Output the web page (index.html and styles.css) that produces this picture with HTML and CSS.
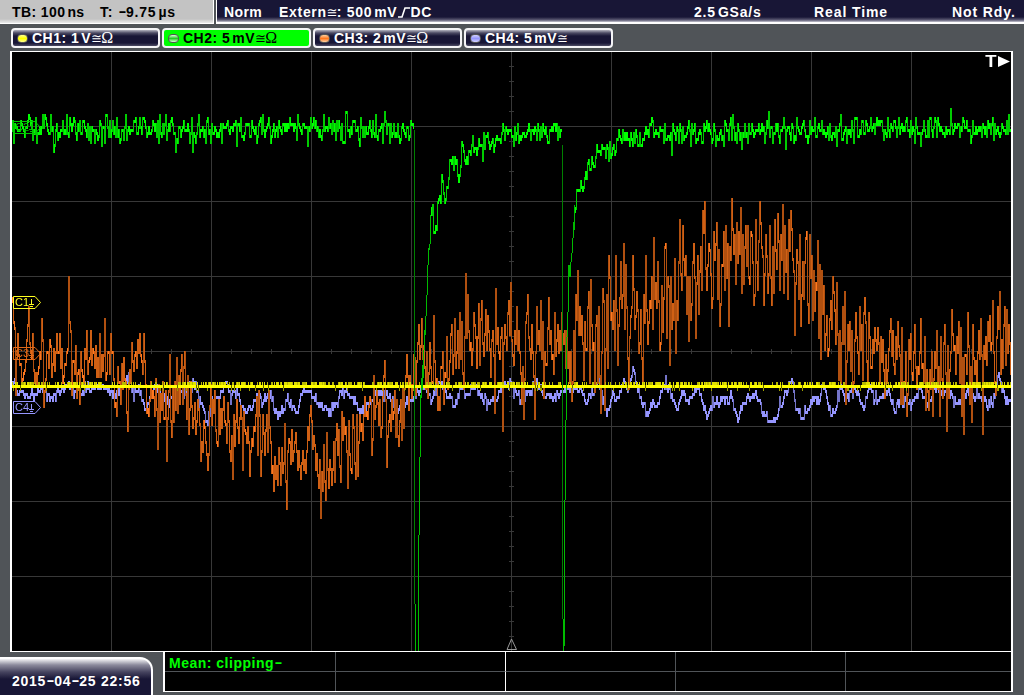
FILE: index.html
```html
<!DOCTYPE html>
<html lang="en">
<head>
    <meta charset="UTF-8">
    <meta name="viewport" content="width=device-width, initial-scale=1.0">
    <title>Oscilloscope</title>
    <link rel="stylesheet" href="styles.css">
</head>
<body>

    <div class="status-bar">
        <div class="timebase">
            <span class="tb">TB: 100<i></i>ns</span>
            <span class="offset">T: <b class="dash">-</b>9.75<i></i>µs</span>
        </div>
        <div class="trigger">
            <span class="mode">Norm</span>
            <span class="source">Extern<em>≅</em>: 500<i></i>mV<svg class="edge" width="13" height="11" viewBox="0 0 13 11"><path d="M1 10h4l3-9h5" fill="none" stroke="#fff" stroke-width="1.6"/></svg>DC</span>
            <span class="rate">2.5<i></i>GSa/s</span>
            <span class="sampling">Real Time</span>
            <span class="state">Not Rdy.</span>
        </div>
    </div>

    <div class="channels">
        <div class="channel ch1"><span class="led"></span><span class="ch-text">CH1: 1<i></i>V<em>≅</em><em class="ohm">Ω</em></span></div>
        <div class="channel ch2 active"><span class="led"></span><span class="ch-text">CH2: 5<i></i>mV<em>≅</em><em class="ohm">Ω</em></span></div>
        <div class="channel ch3"><span class="led"></span><span class="ch-text">CH3: 2<i></i>mV<em>≅</em><em class="ohm">Ω</em></span></div>
        <div class="channel ch4"><span class="led"></span><span class="ch-text">CH4: 5<i></i>mV<em>≅</em></span></div>
    </div>

    <div class="screen">
        <canvas id="plot" width="999" height="599"></canvas>
        <div class="tag tag1"><svg width="29" height="14"><path d="M.5 .5h21.500l5.500 6l-5.500 6h-21.500zM16 8.500h5M18.500 3v5.500M17 10.500h3"/></svg><span>C1</span></div>
        <div class="tag tag2"><svg width="29" height="14"><path d="M.5 .5h21.500l5.500 6l-5.500 6h-21.500zM16 8.500h5M18.500 3v5.500M17 10.500h3"/></svg><span>C2</span></div>
        <div class="tag tag3"><svg width="29" height="14"><path d="M.5 .5h21.500l5.500 6l-5.500 6h-21.500zM16 8.500h5M18.500 3v5.500M17 10.500h3"/></svg><span>C3</span></div>
        <div class="tag tag4"><svg width="29" height="14"><path d="M.5 .5h21.500l5.500 6l-5.500 6h-21.500zM16 8.500h5M18.500 3v5.500M17 10.500h3"/></svg><span>C4</span></div>
        <div class="trigger-mark"><span>T</span><svg width="12" height="11"><path d="M0 0L12 5.500L0 11z" fill="#fff"/></svg></div>
        <svg class="ref-mark" width="12" height="13"><path d="M5.500 1L1 11.500h9.500z" fill="none" stroke="#999"/></svg>
    </div>

    <div class="footer">
        <div class="clock">2015<b class="dash">-</b>04<b class="dash">-</b>25 22:56</div>
        <div class="measure">
            <div class="cell"><span>Mean: clipping<b class="dash">-</b></span></div>
            <div class="cell half"></div>
            <div class="cell"></div>
            <div class="cell"></div>
            <div class="cell"></div>
            <div class="cell low"></div>
            <div class="cell low half"></div>
            <div class="cell low"></div>
            <div class="cell low"></div>
            <div class="cell low"></div>
        </div>
    </div>

    <script src="plot.js"></script>
</body>
</html>
```
FILE: styles.css
```css
* {
    box-sizing: border-box;
}
body {
    margin: 0;
    width: 1024px;
    height: 695px;
    overflow: hidden;
    background: #505458;
    color: white;
    font-family: "Liberation Sans", Arial, sans-serif;
    font-size: 14px;
    font-weight: bold;
    line-height: 16px;
    white-space: nowrap;
}
i {
    display: inline-block;
    width: 2px;
}
em {
    font-family: "DejaVu Sans", sans-serif;
    font-style: normal;
    font-weight: normal;
    font-size: 13px;
    letter-spacing: 0;
    line-height: 1px;
    display: inline-block;
    width: 10px;
}
em.ohm {
    width: 12px;
    font-family: "Liberation Serif", serif;
    font-size: 16px;
}
.dash {
    display: inline-block;
    transform: translateY(-1px) scaleX(1.7);
    width: 8px;
    padding-left: 2px;
}
.status-bar {
    display: flex;
    height: 24px;
    gap: 2px;
}
.timebase {
    width: 214px;
    display: grid;
    grid-template-columns: 88px 1fr;
    padding: 4px 0 0 12px;
    background: linear-gradient(#c3c3c3 19px, #ececec 23px);
    border-right: 1px solid white;
    border-bottom: 1px solid white;
    color: black;
}
.trigger {
    flex: 1;
    display: grid;
    grid-template-columns: 55px 415px 120px 138px 1fr;
    padding: 4px 0 0 7px;
    background: linear-gradient(#181636 17px, #5d5b74 20px, #c8c7d2 22px);
    border-left: 1px solid white;
    border-bottom: 2px solid white;
}
.tb {
    letter-spacing: 0.4px;
}
.offset {
    letter-spacing: 0.8px;
}
.mode {
    letter-spacing: 0.4px;
}
.source {
    letter-spacing: 0.7px;
}
.rate {
    letter-spacing: 0.8px;
}
.sampling,
.state {
    letter-spacing: 0.9px;
}
.edge {
    vertical-align: -1px;
}
.channels {
    display: flex;
    gap: 2px;
    padding: 4px 0 0 11px;
    height: 27px;
}
.channel {
    width: 149px;
    height: 20px;
    display: flex;
    align-items: center;
    gap: 4px;
    padding-left: 4px;
    border: 2px solid #f4f4f6;
    border-radius: 4px;
    background: linear-gradient(#b4b4c0, #4b4a63 3px, #181636 6px, #181636 13px, #4b4a63);
}
.channel.active {
    background: #00ff00;
    color: black;
}
.ch-text {
    letter-spacing: 0.5px;
}
.led {
    width: 11px;
    height: 9px;
    border-radius: 4px;
    border: 1px solid #555;
}
.ch1 .led {
    background: linear-gradient(#ffff90, #ffff00, #ffff90);
}
.ch2 .led {
    background: linear-gradient(#dfd, #2c2, #dfd);
}
.ch3 .led {
    background: linear-gradient(#ffd0a0, #ff7820, #ffd0a0);
}
.ch4 .led {
    background: linear-gradient(#d0d0ff, #9696ff, #d0d0ff);
}
.screen {
    position: relative;
    margin-left: 10px;
    width: 1003px;
    height: 601px;
    border: 1px solid white;
    border-width: 1px 2px;
    background: black;
}
.screen canvas {
    display: block;
}
.tag {
    position: absolute;
    left: 1px;
    height: 14px;
    font-size: 11px;
    font-weight: normal;
    line-height: 13px;
}
.tag svg {
    display: block;
    fill: none;
    stroke: currentColor;
}
.tag span {
    position: absolute;
    left: 2px;
    top: 0;
}
.tag1 {
    top: 244px;
    color: #ffff20;
}
.tag2 {
    top: 69px;
    color: #00c800;
}
.tag3 {
    top: 295px;
    color: #e06818;
}
.tag4 {
    top: 349px;
    color: #9696ff;
}
.trigger-mark {
    position: absolute;
    right: 1px;
    top: 3px;
    display: flex;
    align-items: center;
    gap: 2px;
    font-size: 16px;
    line-height: 13px;
}
.trigger-mark span {
    transform: scaleX(1.15);
}
.ref-mark {
    position: absolute;
    left: 494px;
    top: 586px;
}
.footer {
    display: flex;
    gap: 10px;
    height: 43px;
}
.clock {
    width: 153px;
    height: 38px;
    margin-top: 5px;
    padding: 14px 0 0 12px;
    border-top: 2px solid white;
    border-right: 2px solid white;
    border-radius: 0 13px 0 0;
    background: linear-gradient(#f4f4f6, #8b8a9c 6px, #46445f 13px, #181636 20px);
    letter-spacing: 0.75px;
}
.measure {
    width: 850px;
    height: 40px;
    display: grid;
    grid-template-columns: 171px 170px 170px 170px 1fr;
    grid-template-rows: 20px 19px;
    border: 2px solid white;
    border-top: 0;
    border-bottom: 1px solid white;
    background: black;
    color: #00ff00;
}
.cell {
    border-right: 1px solid #505458;
    border-bottom: 1px solid #505458;
    padding: 3px 0 0 4px;
    letter-spacing: 0.5px;
}
.cell.half {
    border-right-color: white;
}
.cell.low {
    border-bottom: 0;
}
.cell:nth-child(5n) {
    border-right: 0;
}
```
FILE: plot.js
```js
const canvas = document.getElementById("plot");
const ctx = canvas.getContext("2d");
const X0 = 12, X1 = 1010, Y0 = 52;
ctx.translate(-X0, -Y0);

let seed = 7;
function rnd() {
    seed = (seed * 1664525 + 1013904223) % 4294967296;
    return seed / 4294967296;
}

function bar(x, top, bottom, color, w = 1) {
    ctx.fillStyle = color;
    ctx.fillRect(x, top, w, bottom - top);
}

// graticule
for (let x = 111; x < X1; x += 100) bar(x, 52, 651, "#383838");
for (let y = 126; y < 651; y += 75) bar(12, y, y + 1, "#383838", 999);
for (let x = 31; x < X1; x += 20) bar(x, 349, 354, "#383838");
for (let y = 66; y < 651; y += 15) bar(509, y, y + 1, "#383838", 5);

const blue = [12,380,16,390,22,394,32,394,40,388,48,395,58,391,66,385,75,392,85,388,95,385,105,388,112,393,120,390,128,376,133,392,138,388,145,410,150,395,158,388,165,400,175,395,182,390,190,385,195,385,200,402,207,420,213,395,218,398,225,380,230,399,236,390,244,409,252,405,257,393,263,401,270,390,273,405,277,412,286,400,291,404,296,412,302,388,310,392,317,405,330,409,336,400,344,388,352,398,360,412,368,402,375,395,384,390,390,400,396,410,402,400,410,398,417,388,425,388,430,395,436,390,441,382,448,397,453,400,460,391,468,391,476,387,480,395,487,402,495,397,504,382,512,385,518,396,521,400,528,392,537,380,544,397,550,395,558,393,565,388,575,388,580,390,585,401,592,390,597,382,602,395,607,411,612,396,617,398,623,378,627,385,632,370,637,385,641,402,647,412,652,400,657,405,664,380,670,392,676,408,682,390,688,400,694,388,700,394,706,416,712,402,718,400,724,398,730,394,738,418,743,402,748,396,756,393,762,410,768,421,775,419,781,400,786,391,791,378,794,400,799,414,804,408,808,410,812,398,818,396,822,382,828,404,834,412,840,388,846,396,850,388,854,386,863,408,869,385,877,400,883,396,888,391,894,410,900,398,904,400,910,402,915,395,920,390,926,400,935,386,942,395,948,392,953,399,960,402,967,388,975,396,980,394,985,400,992,400,998,372,1003,393,1008,400,1011,396];

// x, highest and lowest point until the next x
const orange = [12,298,330,15,333,396,20,362,385,24,340,372,27,307,355,31,334,384,35,352,386,40,319,360,43,350,408,47,339,370,50,345,378,53,334,372,58,334,370,62,352,385,67,277,350,70,331,395,74,345,400,79,350,406,82,348,385,85,331,375,90,331,365,94,345,378,97,334,377,100,353,378,102,319,372,105,350,380,108,334,375,112,350,407,115,365,418,119,364,404,122,358,390,125,380,433,128,370,390,131,341,373,135,338,368,138,332,362,142,334,375,145,385,415,148,380,416,152,378,416,156,385,450,160,380,420,164,390,463,167,355,420,170,388,439,174,358,410,177,375,415,180,355,405,183,352,395,186,376,436,190,380,430,193,402,436,197,400,425,200,420,463,204,425,472,209,385,425,213,390,445,217,398,448,220,395,430,224,402,445,228,420,462,232,415,481,235,400,430,238,405,445,242,410,472,246,425,478,250,427,452,254,395,432,257,391,457,260,415,478,263,415,455,267,391,452,270,440,475,272,455,492,275,465,486,278,448,485,281,448,475,283,424,465,285,450,511,288,430,465,292,440,462,295,433,470,298,450,480,302,450,472,305,425,475,308,404,440,311,420,450,314,445,470,317,460,490,320,470,519,323,445,500,326,433,490,329,460,486,332,440,482,335,424,455,338,430,482,341,410,440,343,418,435,346,450,490,348,420,470,351,415,475,353,427,480,356,415,478,358,415,445,362,395,440,366,395,420,370,400,457,373,375,420,376,390,425,379,400,437,382,361,400,385,400,469,388,398,432,392,390,420,395,400,448,399,400,440,402,385,430,404,355,390,408,375,410,410,355,400,414,343,395,418,325,360,420,319,360,424,350,400,428,343,385,432,316,385,434,360,410,438,365,412,441,350,405,444,335,390,448,334,380,451,325,375,454,318,370,457,313,370,460,320,375,463,335,390,465,274,340,468,330,350,471,313,365,474,325,370,477,304,365,480,301,358,484,310,350,487,316,350,490,340,378,492,330,414,495,289,345,498,335,360,501,326,433,503,325,345,506,313,350,508,283,335,511,340,367,514,330,345,516,307,350,519,350,375,521,365,420,524,320,380,526,295,340,529,325,360,532,350,420,535,305,355,538,301,350,541,320,400,544,350,367,547,298,345,550,330,360,552,313,375,555,325,356,558,330,355,560,313,350,563,330,370,566,330,370,568,350,385,570,350,403,573,330,380,575,295,320,577,271,335,580,315,345,583,320,380,586,305,350,588,292,385,590,280,350,593,325,392,596,315,385,598,305,414,601,289,355,603,300,410,605,295,370,608,256,320,611,300,330,614,256,350,617,298,365,620,260,310,622,244,330,625,265,360,628,315,390,631,256,310,634,292,330,637,310,355,640,310,385,643,295,325,645,256,345,648,300,325,650,275,330,653,238,300,656,260,310,658,300,350,660,285,345,663,245,300,665,244,340,668,285,365,670,275,330,672,259,320,675,300,355,677,260,320,679,220,290,682,226,275,685,255,315,688,275,342,690,260,320,693,244,280,695,255,340,698,270,315,700,245,290,702,210,235,704,202,270,706,243,292,709,250,310,712,230,300,714,222,260,717,250,300,719,265,327,722,230,290,725,225,280,728,245,327,730,199,260,733,235,285,736,223,265,738,206,255,741,235,295,743,225,285,746,225,280,749,232,285,751,235,307,754,220,297,757,240,290,759,202,250,762,255,307,765,235,295,768,226,275,770,245,307,773,220,295,776,214,270,779,235,290,781,205,260,783,225,295,786,220,300,789,210,252,791,228,262,793,270,337,795,250,285,798,235,300,800,260,327,803,238,300,806,231,305,808,235,325,811,255,320,813,270,312,816,241,290,818,265,340,820,271,361,823,285,350,825,315,358,828,300,350,831,277,330,833,291,346,836,283,335,838,330,380,840,305,385,843,292,345,845,325,405,848,320,350,850,330,394,853,340,385,855,313,355,858,307,375,861,325,380,863,298,325,866,360,385,868,312,370,871,340,370,873,328,355,876,328,350,879,335,385,882,340,400,885,355,385,888,317,350,891,330,365,894,335,375,896,322,360,899,355,405,901,328,405,904,350,385,906,340,417,909,334,375,912,350,380,914,325,370,916,365,390,919,319,370,922,335,385,925,370,412,928,370,410,930,350,417,933,350,380,935,331,370,937,365,417,940,335,400,943,325,375,946,345,433,948,350,400,951,310,350,954,345,375,956,322,355,959,328,385,961,358,417,963,355,436,965,313,375,968,345,405,970,365,424,972,325,375,975,350,385,978,319,360,981,355,436,983,335,360,986,322,365,989,315,350,991,301,345,993,350,395,996,307,340,998,292,330,1000,340,375,1003,307,365,1006,310,355,1008,325,375,1011,325,375];

const green = [12,129,100,128,250,128,413,128];
const greenMid = [431,207,433,222,436,222,437,208,439,200,441,184,445,193,447,180,449,158,451,166,453,165,458,172,461,153,466,155,472,146,478,146,485,139,495,138,500,134,508,131,520,132,540,129,560,130];
const greenEnd = [575,210,576,195,578,180,582,178,585,178,588,163,592,164,597,149,605,149,615,144,625,136,650,133,700,130,800,128,900,128,1010,126];

function at(points, x) {
    for (let i = 0; i < points.length - 2; i += 2) {
        if (x <= points[i + 2]) {
            const t = (x - points[i]) / (points[i + 2] - points[i]);
            return points[i + 1] + t * (points[i + 3] - points[i + 1]);
        }
    }
    return points[points.length - 1];
}

// long strokes are drawn darker, as the beam passes them faster
function step(x, a, b, shades) {
    let top = Math.round(Math.min(a, b) / 3) * 3;
    let bottom = Math.round(Math.max(a, b) / 3) * 3 + 3;
    const n = bottom - top;
    bar(x, top, bottom, n < 10 ? shades[0] : n < 38 ? shades[1] : shades[2]);
}

function noisy(points, from, to, amp, shades) {
    let prev = at(points, from);
    for (let x = from; x <= to; x++) {
        const spread = rnd() < 0.12 ? 1.6 : 1;
        const y = at(points, x) + (rnd() + rnd() - 1) * amp * spread;
        step(x, prev, y, shades);
        prev = y;
    }
}

noisy(blue, X0, X1, 7, ["#9696ff", "#7474c8", "#6060a8"]);

let last = 300;
for (let i = 0; i < orange.length - 3; i += 3) {
    const [x, top, bottom, next] = orange.slice(i, i + 4);
    const width = next - x;
    const up = Math.floor(rnd() * width);
    const down = (up + 1 + Math.floor(rnd() * (width - 1))) % width;
    for (let c = 0; c < width; c++) {
        let y = top + (0.25 + rnd() * 0.5) * (bottom - top);
        if (c === up) y = top;
        if (c === down) y = bottom - 3;
        step(x + c, last, y, ["#ff7820", "#d06014", "#b05010"]);
        last = y;
    }
}

// channel 1 sits on its baseline with one step of noise
let busy = true;
for (let x = X0; x <= X1; x++) {
    if (rnd() < 0.06) busy = !busy;
    const r = rnd();
    bar(x, 385, 388, r > 0.97 ? "#606000" : "#ffff00");
    if (r < (busy ? 0.75 : 0.35)) bar(x, 382, 385, r < 0.3 ? "#b8b800" : "#e0e000");
    if (r > 0.95) bar(x, 388, 391, "#a0a000");
}

const greens = ["#00ff00", "#00cc00", "#009c00"];
noisy(green, X0, 413, 17, greens);
noisy(greenMid, 431, 561, 13, greens);
noisy(greenEnd, 575, X1, 15, greens);

bar(414, 130, 604, "#008000");
[[415,604,651],[418,535,651],[419,457,535],[420,395,457],[421,378,398],[422,365,390],[423,350,378],[424,330,350],[425,316,335],[426,295,316],[427,265,295],[428,248,265],[429,244,250],[430,215,244]].forEach(s => bar(s[0], s[1], s[2], "#00bb00"));
bar(562, 145, 619, "#008000");
[[563,619,651],[564,500,646],[565,420,500],[566,337,420],[567,312,337],[568,265,312],[569,265,277],[570,262,277],[571,253,262],[572,238,253],[573,222,238],[574,205,230]].forEach(s => bar(s[0], s[1], s[2], "#00bb00"));
```
